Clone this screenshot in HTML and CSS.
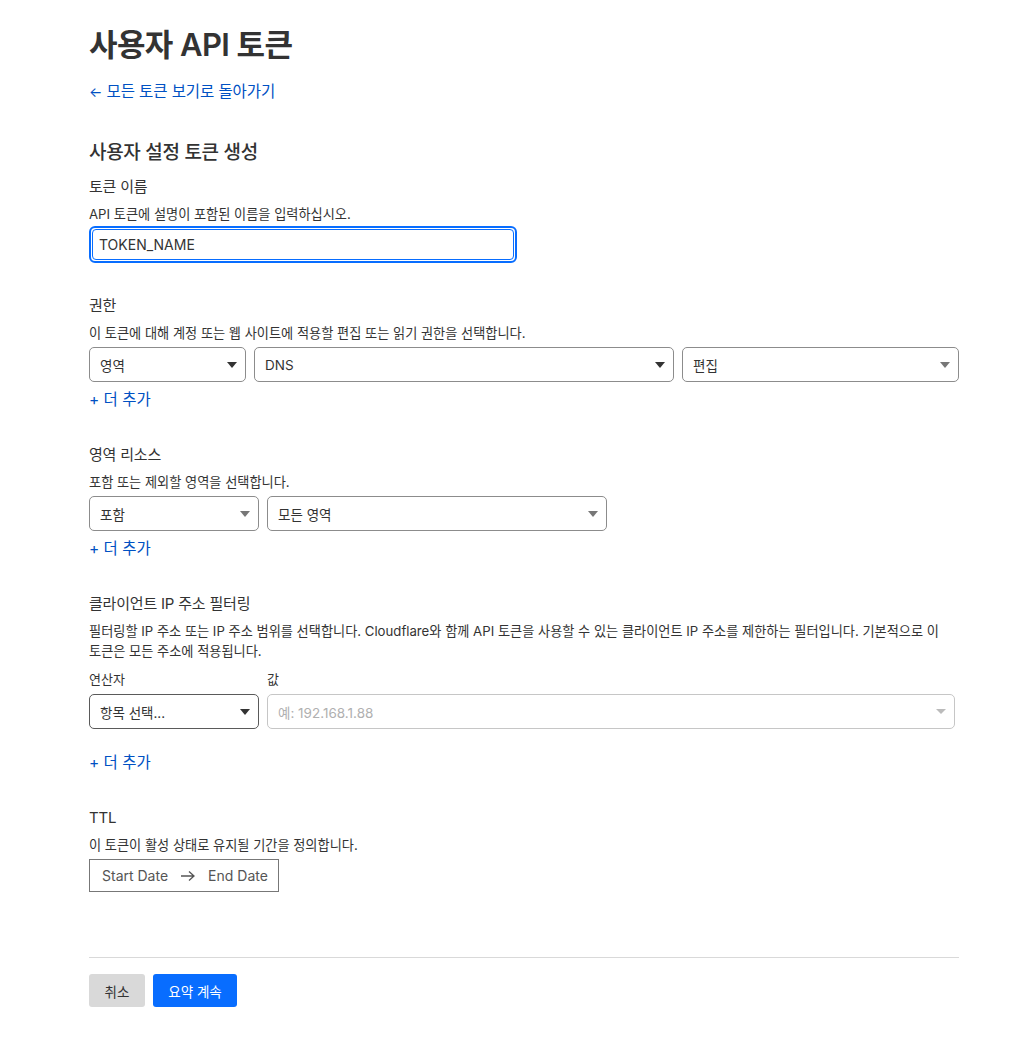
FILE: index.html
```html
<!DOCTYPE html>
<html lang="ko">
<head>
<meta charset="utf-8">
<title>사용자 API 토큰</title>
<link rel="stylesheet" href="styles.css">
</head>
<body>
<main class="page">
  <h1 class="title">사용자 API 토큰</h1>
  <a class="back-link" href="#"><span class="arrow">←</span> 모든 토큰 보기로 돌아가기</a>

  <h2 class="subtitle">사용자 설정 토큰 생성</h2>

  <section class="field first">
    <div class="label">토큰 이름</div>
    <div class="desc">API 토큰에 설명이 포함된 이름을 입력하십시오.</div>
    <div class="focus-ring"><div class="text-input">TOKEN_NAME</div></div>
  </section>

  <section class="field">
    <div class="label">권한</div>
    <div class="desc">이 토큰에 대해 계정 또는 웹 사이트에 적용할 편집 또는 읽기 권한을 선택합니다.</div>
    <div class="row">
      <div class="select w157"><span>영역</span><i class="caret dark"></i></div>
      <div class="select w420"><span>DNS</span><i class="caret dark"></i></div>
      <div class="select grow"><span>편집</span><i class="caret mid"></i></div>
    </div>
    <a class="add-more" href="#">+ 더 추가</a>
  </section>

  <section class="field">
    <div class="label">영역 리소스</div>
    <div class="desc">포함 또는 제외할 영역을 선택합니다.</div>
    <div class="row">
      <div class="select w170"><span>포함</span><i class="caret mid"></i></div>
      <div class="select w340"><span>모든 영역</span><i class="caret mid"></i></div>
    </div>
    <a class="add-more" href="#">+ 더 추가</a>
  </section>

  <section class="field">
    <div class="label">클라이언트 IP 주소 필터링</div>
    <div class="desc">필터링할 IP 주소 또는 IP 주소 범위를 선택합니다. Cloudflare와 함께 API 토큰을 사용할 수 있는 클라이언트 IP 주소를 제한하는 필터입니다. 기본적으로 이 토큰은 모든 주소에 적용됩니다.</div>
    <div class="row labeled">
      <div class="col w170">
        <div class="small-label">연산자</div>
        <div class="select strong"><span>항목 선택...</span><i class="caret dark"></i></div>
      </div>
      <div class="col value-col">
        <div class="small-label">값</div>
        <div class="select faint"><span class="placeholder">예: 192.168.1.88</span><i class="caret light"></i></div>
      </div>
    </div>
    <a class="add-more spaced" href="#">+ 더 추가</a>
  </section>

  <section class="field">
    <div class="label">TTL</div>
    <div class="desc">이 토큰이 활성 상태로 유지될 기간을 정의합니다.</div>
    <div class="date-range">
      <span>Start Date</span>
      <svg class="date-arrow" width="16" height="12" viewBox="0 0 16 12"><path d="M1 6h13M9 1.5 14 6l-5 4.5" fill="none" stroke="#555" stroke-width="1.3"/></svg>
      <span>End Date</span>
    </div>
  </section>

  <hr class="divider">

  <div class="actions">
    <button class="btn btn-cancel">취소</button>
    <button class="btn btn-primary">요약 계속</button>
  </div>
</main>
</body>
</html>
```

FILE: styles.css
```css
* { box-sizing: border-box; }
html, body { margin: 0; padding: 0; background: #fff; }
body {
  font-family: "Inter", "Noto Sans CJK KR", sans-serif;
  color: #313131;
  word-break: keep-all;
}
.page {
  width: 959px;
  padding: 20px 0 40px 89px;
}
.title {
  margin: 0;
  font-size: 31px;
  line-height: 50px;
  font-weight: 600;
  color: #333;
  letter-spacing: -0.6px;
}
.back-link {
  display: block;
  margin-top: 11px;
  font-size: 15.5px;
  line-height: 22px;
  color: #0051c3;
  text-decoration: none;
  letter-spacing: -0.1px;
}
.back-link .arrow { font-size: 14px; }
.subtitle {
  margin: 36px 0 0;
  font-size: 19px;
  line-height: 28px;
  font-weight: 500;
  color: #333;
  letter-spacing: -0.3px;
}
.field { margin-top: 31px; }
.field.first { margin-top: 8px; }
.label {
  font-size: 15px;
  line-height: 24px;
  color: #333;
  letter-spacing: -0.2px;
}
.desc {
  margin-top: 5px;
  font-size: 13.2px;
  line-height: 20px;
  color: #333;
}
.focus-ring {
  margin-top: 2px;
  width: 428px;
  height: 37px;
  border: 2px solid #086dff;
  border-radius: 6px;
  padding: 1px;
}
.text-input {
  height: 100%;
  border: 1px solid #086dff;
  border-radius: 4px;
  padding: 0 6px;
  display: flex;
  align-items: center;
  font-size: 14px;
  color: #333;
}
.row {
  margin-top: 4px;
  display: flex;
  gap: 8px;
  width: 870px;
}
.select {
  height: 35px;
  border: 1px solid #8c8c8c;
  border-radius: 5px;
  display: flex;
  align-items: center;
  justify-content: space-between;
  padding: 0 8px 0 10px;
  font-size: 13.5px;
  color: #333;
}
.w157 { width: 157px; }
.w420 { width: 420px; }
.w170 { width: 170px; }
.w340 { width: 340px; }
.grow { flex: 1; }
.caret {
  width: 0; height: 0;
  border-left: 5.5px solid transparent;
  border-right: 5.5px solid transparent;
  border-top: 6px solid #444;
}
.caret.dark { border-top-color: #333; }
.caret.mid { border-top-color: #777; }
.caret.light { border-top-color: #bbb; border-left-width: 5px; border-right-width: 5px; border-top-width: 5px; }
.add-more {
  display: block;
  margin-top: 6px;
  font-size: 15.5px;
  line-height: 24px;
  color: #0051c3;
  text-decoration: none;
  width: max-content;
}
.add-more.spaced { margin-top: 22px; }
.row.labeled { margin-top: 8px; }
.col { display: flex; flex-direction: column; gap: 5px; }
.value-col { width: 688px; }
.small-label {
  font-size: 13px;
  line-height: 20px;
  color: #333;
}
.select.strong { border-color: #5a5a5a; }
.select.faint { border-color: #c6c6c6; }
.placeholder { color: #b0b0b0; }
.date-range {
  margin-top: 4px;
  width: 190px;
  height: 33px;
  border: 1px solid #777;
  display: flex;
  align-items: center;
  gap: 12px;
  padding: 0 12px;
  font-size: 14px;
  color: #555;
  white-space: nowrap;
}
.date-arrow { flex: none; }
.divider {
  margin: 65px 0 0;
  width: 870px;
  border: 0;
  border-top: 1px solid #d9d9d9;
}
.actions {
  margin-top: 16px;
  display: flex;
  gap: 8px;
}
.btn {
  height: 33px;
  border: 0;
  border-radius: 3px;
  font-family: inherit;
  font-size: 13.5px;
  padding: 0 16px;
}
.btn-cancel { width: 56px; background: #d9d9d9; color: #333; padding: 0; }
.btn-primary { width: 84px; background: #086dff; color: #fff; padding: 0; }
```
